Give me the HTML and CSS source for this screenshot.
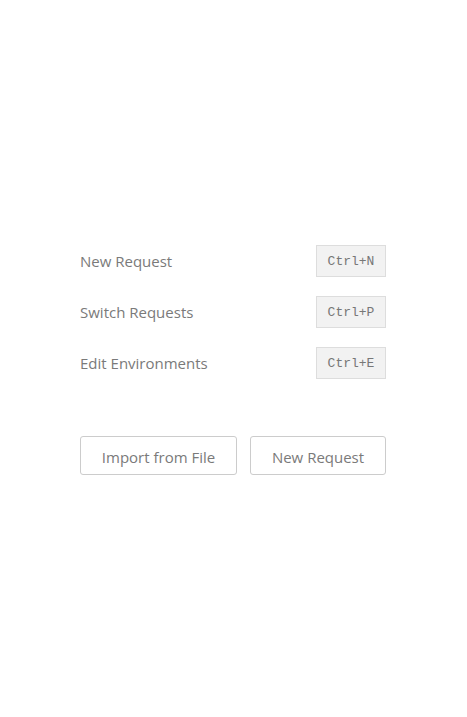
FILE: index.html
```html
<!DOCTYPE html>
<html>
<head>
<meta charset="utf-8">
<link rel="stylesheet" href="styles.css">
</head>
<body>
<div class="page">
  <div class="panel">
    <div class="shortcuts">
      <div class="row"><span class="label">New Request</span><kbd class="key">Ctrl+N</kbd></div>
      <div class="row"><span class="label">Switch Requests</span><kbd class="key">Ctrl+P</kbd></div>
      <div class="row"><span class="label">Edit Environments</span><kbd class="key">Ctrl+E</kbd></div>
    </div>
    <div class="actions">
      <button class="btn btn-import">Import from File</button>
      <button class="btn btn-new">New Request</button>
    </div>
  </div>
</div>
</body>
</html>
```

FILE: styles.css
```css
html, body {
  margin: 0;
  padding: 0;
  background: #ffffff;
}
body {
  font-family: "Open Sans", "Noto Sans", sans-serif;
  color: #777777;
}
.page {
  height: 717px;
  display: flex;
  align-items: center;
  padding-left: 80px;
}
.panel {
  width: 306px;
  display: flex;
  flex-direction: column;
  margin-top: 3px;
}
.shortcuts {
  display: flex;
  flex-direction: column;
  gap: 19px;
}
.row {
  display: flex;
  align-items: center;
  justify-content: space-between;
  height: 32px;
}
.label {
  font-size: 15px;
  color: #7a7a7a;
}
.key {
  box-sizing: border-box;
  width: 70px;
  height: 32px;
  display: flex;
  align-items: center;
  justify-content: center;
  font-family: "Liberation Mono", "DejaVu Sans Mono", monospace;
  font-size: 13px;
  color: #777777;
  background: #f2f2f2;
  border: 1px solid #dddddd;
}
.actions {
  display: flex;
  gap: 13px;
  margin-top: 57px;
}
.btn {
  box-sizing: border-box;
  height: 39px;
  padding: 2px 0 0;
  background: #ffffff;
  border: 1px solid #cccccc;
  border-radius: 3px;
  font-family: "Open Sans", "Noto Sans", sans-serif;
  font-size: 15px;
  color: #7a7a7a;
}
.btn-import {
  width: 157px;
}
.btn-new {
  width: 136px;
}
```
